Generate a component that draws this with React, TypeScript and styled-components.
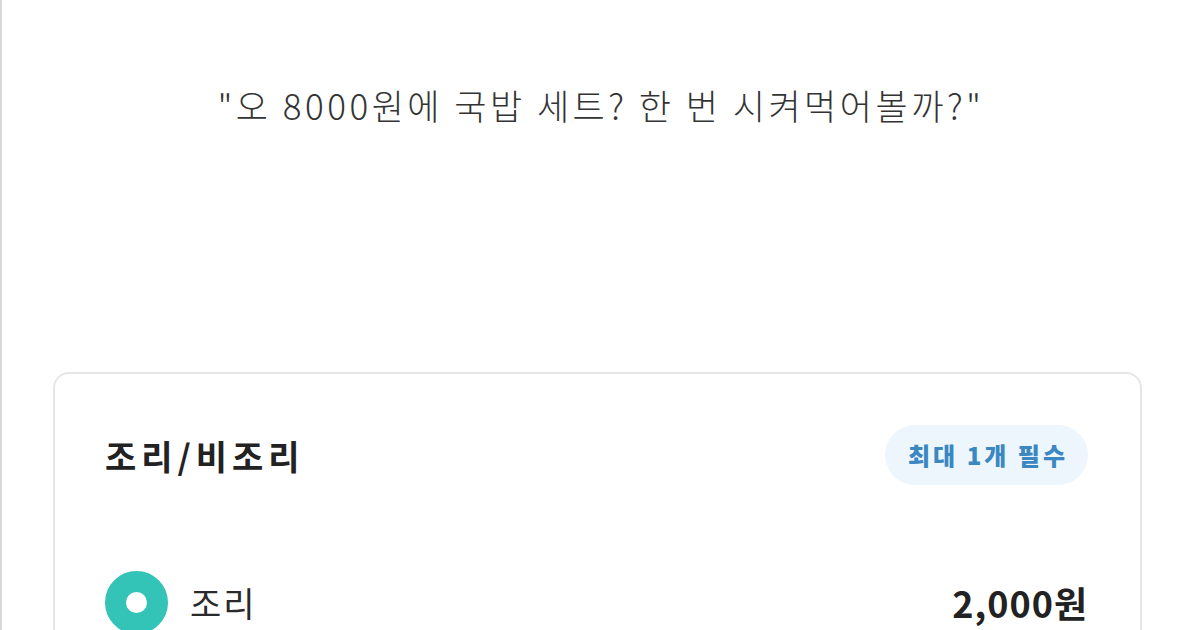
import React from "react"
import styled, { createGlobalStyle } from 'styled-components'

const GlobalStyle = createGlobalStyle`
html, body {
    margin: 0;
    padding: 0;
    background: #FFF;
}
body {
    font-family: "Noto Sans CJK KR", "Noto Sans", sans-serif;
}
`

const Option: React.FC<{
    label: string
    price: string
    checked?: boolean
}> = ({ label, price, checked }) => (
    <OptionRow>
        <OptionLeft>
            <Radio checked={checked} />
            <OptionLabel>{label}</OptionLabel>
        </OptionLeft>
        <Price>{price}</Price>
    </OptionRow>
)

const App: React.FC = () => (
    <Page>
        <GlobalStyle />
        <Quote>"오 8000원에 국밥 세트? 한 번 시켜먹어볼까?"</Quote>
        <Card>
            <CardHeader>
                <Title>조리/비조리</Title>
                <Badge>최대 1개 필수</Badge>
            </CardHeader>
            <Option label="조리" price="2,000원" checked />
        </Card>
    </Page>
)

const Page = styled.div`
width: 1200px;
height: 630px;
box-sizing: border-box;
border-left: 2px solid #d9d9d9;
overflow: hidden;
display: flex;
flex-direction: column;
`

const Quote = styled.p`
margin: 80px 0 0 0;
text-align: center;
font-size: 35px;
font-weight: 300;
color: #333;
letter-spacing: 3.5px;
line-height: 50px;
`

const Card = styled.div`
margin: 242px 0 0 51px;
width: 1089px;
flex-shrink: 0;
box-sizing: border-box;
border: 2px solid #e6e6e6;
border-radius: 16px;
padding: 51px 52px 40px 50px;
`

const CardHeader = styled.div`
display: flex;
justify-content: space-between;
align-items: center;
height: 60px;
`

const Title = styled.h2`
margin: 0;
font-size: 34px;
font-weight: 700;
color: #222;
letter-spacing: 5px;
`

const Badge = styled.span`
background: #edf6fc;
color: #3a87c2;
font-size: 24px;
font-weight: 900;
letter-spacing: 3px;
border-radius: 30px;
padding: 0 20px 0 23px;
height: 60px;
line-height: 60px;
`

const OptionRow = styled.div`
margin-top: 85px;
display: flex;
justify-content: space-between;
align-items: center;
height: 64px;
`

const OptionLeft = styled.div`
display: flex;
align-items: center;
gap: 22px;
`

const Radio = styled.span<{ checked?: boolean }>`
width: 63px;
height: 63px;
box-sizing: border-box;
border-radius: 50%;
border: ${p => p.checked ? '21px solid #33c4b7' : '2px solid #ccc'};
background: #FFF;
`

const OptionLabel = styled.span`
font-size: 34px;
color: #2a2a2a;
letter-spacing: 2px;
`

const Price = styled.span`
font-size: 36px;
font-weight: 700;
color: #222;
letter-spacing: 1px;
`

export default App
